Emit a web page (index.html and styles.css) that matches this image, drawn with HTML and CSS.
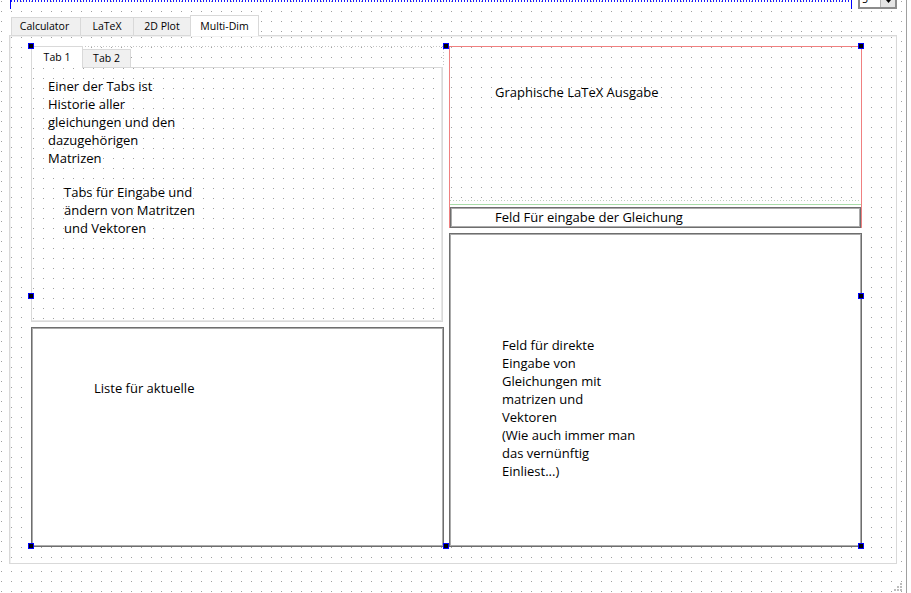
FILE: index.html
```html
<!DOCTYPE html>
<html lang="de">
<head>
<meta charset="utf-8">
<title>Multi-Dim</title>
<link rel="stylesheet" href="styles.css">
</head>
<body>
<div class="form grid-dots">
  <div class="topbar">
    <div class="spacer"></div>
    <div class="spin">
      <span class="spin-value">5</span>
      <span class="spin-button"><svg width="5" height="3" viewBox="0 0 5 3"><path d="M0 0H5L2.5 3Z" fill="#000"/></svg></span>
    </div>
  </div>
  <div class="tabwidget">
    <div class="tabbar">
      <div class="tab tab-calc">Calculator</div>
      <div class="tab tab-latex">LaTeX</div>
      <div class="tab tab-plot">2D Plot</div>
      <div class="tab tab-multi is-active">Multi-Dim</div>
    </div>
    <div class="pane grid-dots">
      <div class="grid">
        <div class="column">
          <div class="subtabs">
            <div class="subtabbar">
              <div class="subtab subtab-1 is-active">Tab 1</div>
              <div class="subtab subtab-2">Tab 2</div>
              <div class="subtabbar-fill"></div>
            </div>
            <div class="subpane grid-dots">
              <p class="note">Einer der Tabs ist<br>Historie aller<br>gleichungen und den<br>dazugehörigen<br>Matrizen</p>
              <p class="note note-indent">Tabs für Eingabe und<br>ändern von Matritzen<br>und Vektoren</p>
            </div>
          </div>
          <div class="listbox"><p class="note">Liste für aktuelle</p></div>
        </div>
        <div class="column">
          <div class="layoutbox">
            <div class="latex-label"><p class="note">Graphische LaTeX Ausgabe</p></div>
            <div class="layout-marker"></div>
            <div class="lineedit">Feld Für eingabe der Gleichung</div>
          </div>
          <div class="textedit"><p class="note">Feld für direkte<br>Eingabe von<br>Gleichungen mit<br>matrizen und<br>Vektoren<br>(Wie auch immer man<br>das vernünftig<br>Einliest...)</p></div>
        </div>
        <span class="handle h-top h-left"></span>
        <span class="handle h-top h-center"></span>
        <span class="handle h-top h-right"></span>
        <span class="handle h-mid h-left"></span>
        <span class="handle h-mid h-right"></span>
        <span class="handle h-bottom h-left"></span>
        <span class="handle h-bottom h-center"></span>
        <span class="handle h-bottom h-right"></span>
      </div>
    </div>
  </div>
</div>
<svg class="grip" width="12" height="12" viewBox="0 0 12 12">
  <rect x="8" y="3" width="2" height="2" fill="#bdbdbd"/>
  <rect x="5" y="6" width="2" height="2" fill="#bdbdbd"/>
  <rect x="8" y="6" width="2" height="2" fill="#bdbdbd"/>
  <rect x="2" y="9" width="2" height="2" fill="#bdbdbd"/>
  <rect x="5" y="9" width="2" height="2" fill="#bdbdbd"/>
  <rect x="8" y="9" width="2" height="2" fill="#bdbdbd"/>
</svg>
</body>
</html>
```

FILE: styles.css
```css
* { box-sizing: border-box; }
html, body { margin: 0; padding: 0; }
body {
  width: 911px;
  height: 593px;
  overflow: hidden;
  position: relative;
  background: #fff;
  font-family: "Open Sans", "Noto Sans", sans-serif;
  color: #000;
}

.grid-dots {
  background-color: #fff;
  background-image:
    linear-gradient(to right, transparent 1px, #fff 1px),
    linear-gradient(to bottom, #a0a0a0 1px, #fff 1px);
  background-size: 10px 10px;
}

.form {
  display: flex;
  flex-direction: column;
  align-items: flex-start;
  width: 907px;
  height: 593px;
  border-right: 1px solid #a0a0a0;
  overflow: hidden;
  background-position: 1px 1px;
}

/* top: horizontal spacer + spin box (cut off) */
.topbar {
  display: flex;
  gap: 6px;
  height: 20px;
  margin-top: -11px;
  padding-left: 10px;
}
.spacer {
  width: 842px;
  height: 20px;
  border-left: 1px solid #0000ff;
  border-right: 1px solid #0000ff;
  background: repeating-linear-gradient(to right, #1a1aff 0 1px, transparent 1px 3px) 0 11px / 100% 2px no-repeat;
}
.spin {
  display: flex;
  width: 39px;
  height: 20px;
  border: 2px solid #8c8c8c;
  background: #fff;
  font-size: 10.5px;
  line-height: 17px;
}
.spin-value { padding-left: 2px; }
.spin-button {
  margin-left: auto;
  width: 15px;
  display: flex;
  align-items: flex-end;
  justify-content: center;
  padding-bottom: 4px;
  background: #e5e5e5;
  border-left: 1px solid #b4b4b4;
}
.spin-button svg { display: block; }

/* outer tab widget */
.tabwidget {
  margin: 6px 0 0 9px;
  width: 888px;
}
.tabbar {
  display: flex;
  align-items: flex-end;
  height: 20px;
  padding-left: 2px;
  position: relative;
  z-index: 1;
}
.tab {
  height: 18px;
  margin-left: -1px;
  border: 1px solid #d9d9d9;
  border-bottom: 0;
  background: #f0f0f0;
  font-size: 10.5px;
  line-height: 17px;
  text-align: center;
  white-space: nowrap;
}
.tab:first-child { margin-left: 0; }
.tab.is-active {
  height: 21px;
  padding-top: 2px;
  margin-bottom: -1px;
  background: #fff;
}
.tab-calc { width: 70px; padding-right: 3px; }
.tab-latex { width: 54px; }
.tab-plot { width: 58px; }
.tab-multi { width: 69px; }

.pane {
  width: 888px;
  height: 529px;
  border: 1px solid #d9d9d9;
  box-shadow: inset 1px 1px 0 #f0f0f0;
  padding: 10px 0 0 21px;
  background-position: 1px 1px;
}

/* main grid layout */
.grid {
  position: relative;
  display: grid;
  grid-template-columns: 413px 413px;
  column-gap: 5px;
  width: 831px;
  height: 501px;
}
.column {
  display: flex;
  flex-direction: column;
  gap: 5px;
  min-height: 0;
}

/* inner tab widget */
.subtabs {
  display: flex;
  flex-direction: column;
  height: 276px;
}
.subtabbar {
  display: flex;
  align-items: flex-end;
  height: 21px;
  position: relative;
  z-index: 1;
  background: repeating-linear-gradient(to right, #c4c4c4 0 1px, transparent 1px 3px) 0 0 / 100% 1px no-repeat;
}
.subtab {
  height: 18px;
  border: 1px solid #d9d9d9;
  border-bottom: 0;
  background: #f0f0f0;
  font-size: 10.5px;
  line-height: 17px;
  text-align: center;
  white-space: nowrap;
}
.subtab.is-active {
  height: 22px;
  padding-top: 2px;
  margin-bottom: -1px;
  background: #fff;
}
.subtab-1 { width: 52px; }
.subtab-2 { width: 49px; margin-left: -1px; }
.subtabbar-fill {
  flex: 1;
  align-self: stretch;
  background: repeating-linear-gradient(to bottom, #c4c4c4 0 1px, transparent 1px 3px) 100% 0 / 1px 100% no-repeat;
}
.subpane {
  width: 412px;
  height: 255px;
  border: 1px solid #d9d9d9;
  box-shadow: inset -1px -1px 0 #e6e6e6;
  padding: 9px 0 0 16px;
  background-position: 1px 0;
}

.note {
  margin: 0;
  font-size: 13px;
  line-height: 18px;
  white-space: nowrap;
}
.note-indent { margin: 16px 0 0 16px; }

.listbox,
.textedit {
  flex: 1;
  border: 1px solid #6e6e6e;
  box-shadow: inset 0 0 0 1px #ababab;
  background: #fff;
}
.listbox { padding: 51px 0 0 62px; }
.textedit { padding: 102px 0 0 52px; }

/* right column layout (red) */
.layoutbox {
  display: flex;
  flex-direction: column;
  height: 182px;
  border: 1px solid #f08080;
  border-bottom: 0;
}
.latex-label {
  height: 154px;
  padding: 36px 0 0 45px;
  background: repeating-linear-gradient(to right, #bccfbc 0 1px, transparent 1px 3px) 0 100% / 100% 1px no-repeat;
}
.layout-marker {
  height: 1px;
  margin-top: 3px;
  background: #a8dca8;
}
.lineedit {
  height: 21px;
  margin-top: 2px;
  border: 1px solid #6e6e6e;
  box-shadow: inset 0 0 0 1px #ababab;
  background: #fff;
  padding-left: 44px;
  font-size: 13px;
  line-height: 19px;
  white-space: nowrap;
}

/* selection handles */
.handle {
  position: absolute;
  z-index: 2;
  width: 6px;
  height: 6px;
  background: #000;
  border: 1px solid #0000ff;
}
.h-top { top: -3px; }
.h-mid { top: 247px; }
.h-bottom { top: 497px; }
.h-left { left: -3px; }
.h-center { left: 412px; }
.h-right { left: 827px; }

.grip {
  position: absolute;
  left: 892px;
  top: 580px;
}
```
